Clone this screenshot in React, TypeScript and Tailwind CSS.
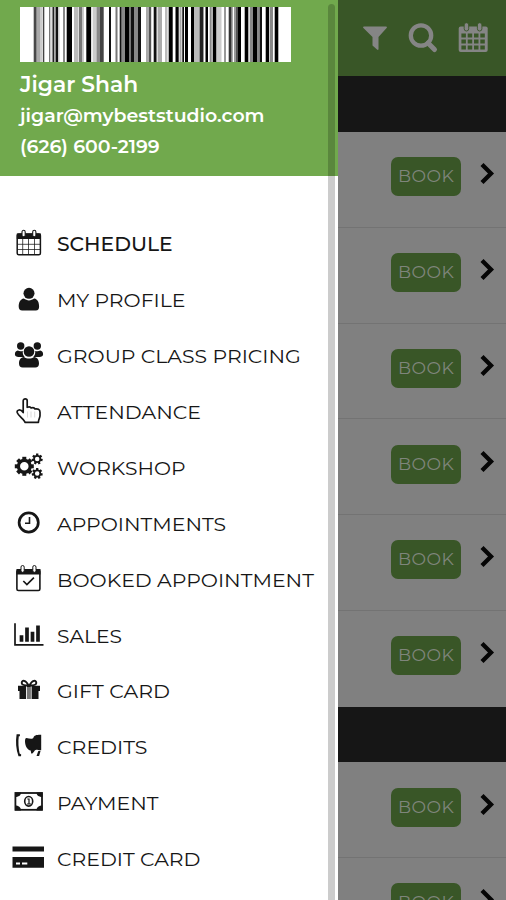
import { useLayoutEffect, useRef, useState, type ReactNode } from "react";

/** A single line of text stretched horizontally to fill a set width. */
function FitText({ text, width, className }: { text: string; width: number; className: string }) {
  const ref = useRef<HTMLSpanElement>(null);
  const [scale, setScale] = useState(1);
  useLayoutEffect(() => {
    const fit = () => {
      if (ref.current) setScale(width / ref.current.offsetWidth);
    };
    fit();
    document.fonts?.ready.then(fit);
  }, [width]);
  return (
    <span
      ref={ref}
      className={"inline-block origin-left whitespace-nowrap " + className}
      style={{ transform: `scaleX(${scale})` }}
    >
      {text}
    </span>
  );
}

// Bars as [start, end, shade], measured from the label's left edge.
const bars: [number, number, string][] = [
  [13.7, 16.7, "#484848"], [16.7, 20, "#aaa"], [20, 22, "#ccc"], [22.8, 24.3, "#444"],
  [29, 30.5, "#777"], [30.5, 32.5, "#ddd"], [32.5, 34, "#222"], [34, 35.7, "#aaa"], [35.7, 38, "#111"], [38, 39.5, "#ccc"],
  [43, 45, "#888"], [46.7, 52, "#000"], [54, 58, "#bbb"], [58, 59, "#ddd"], [59, 62.5, "#777"], [62.5, 64, "#ccc"],
  [66.3, 71, "#000"], [71, 72.5, "#ddd"], [73, 76.5, "#ccc"], [76.5, 80, "#888"], [80, 83.7, "#444"],
  [89, 91, "#111"], [95.5, 97.5, "#777"], [99.7, 101.7, "#111"], [101.7, 105, "#888"], [105, 109, "#000"],
  [109, 111, "#777"], [111, 114, "#111"], [114, 118, "#888"], [118, 121, "#111"],
  [126, 129, "#aaa"], [129, 131, "#555"], [131, 132, "#ddd"], [133.7, 136.7, "#111"], [136.7, 138, "#ddd"], [138, 142, "#aaa"],
  [145, 147.5, "#bbb"], [148.7, 152.7, "#000"], [155.5, 158.7, "#000"], [159.5, 161.5, "#aaa"], [162.3, 164, "#111"],
  [165, 168, "#000"], [171, 174, "#000"], [174, 179, "#bbb"], [179.5, 183, "#222"], [183, 184, "#999"], [185.5, 188, "#000"],
  [189.7, 191.7, "#888"], [192.7, 196.5, "#000"], [196.5, 198, "#ccc"], [198, 201.5, "#ccc"], [204, 206, "#999"],
  [208.7, 211.7, "#333"], [211.7, 213, "#aaa"], [214, 216, "#999"], [216, 218, "#555"], [218, 221, "#000"],
  [224.7, 228.5, "#000"], [228.5, 230, "#ddd"], [230, 233, "#888"], [233, 237, "#000"], [237, 239.7, "#888"], [239.7, 242, "#111"],
  [245.7, 249, "#000"], [249, 250, "#ccc"], [250, 253, "#888"], [254.7, 258.3, "#000"],
];

function Barcode() {
  return (
    <svg className="block h-[55px] w-[271px] bg-white" viewBox="0 0 271 55" preserveAspectRatio="none">
      {bars.map(([a, b, c]) => (
        <rect key={a} x={a} y="0" width={b - a} height="55" fill={c} />
      ))}
    </svg>
  );
}

function Svg({ children }: { children: ReactNode }) {
  return (
    <svg className="block h-8 w-8 shrink-0 text-[#161616]" viewBox="0 0 32 32" fill="none" stroke="currentColor">
      {children}
    </svg>
  );
}

const gear = (cx: number, cy: number, r: number, tooth: number, n: number) =>
  Array.from({ length: n }, (_, i) => (
    <rect
      key={i}
      x={cx - tooth / 2}
      y={cy - r}
      width={tooth}
      height={tooth}
      fill="currentColor"
      stroke="none"
      transform={`rotate(${(i * 360) / n} ${cx} ${cy})`}
    />
  ));

const icons: Record<string, ReactNode> = {
  schedule: (
    <Svg>
      <rect x="5.2" y="6" width="23.2" height="20.7" rx="1.5" strokeWidth="1.5" />
      <path d="M4.8 5.5h24v5.5h-24z" fill="currentColor" stroke="none" />
      <path d="M10.7 11v15M16.5 11v15M22.5 11v15M5.5 16.3h22.5M5.5 21.5h22.5" strokeWidth="1" opacity=".75" />
      <rect x="10" y="2.3" width="3.2" height="6.5" rx="1.6" fill="#fff" strokeWidth="1.1" />
      <rect x="20.7" y="2.3" width="3.2" height="6.5" rx="1.6" fill="#fff" strokeWidth="1.1" />
    </Svg>
  ),
  profile: (
    <Svg>
      <g fill="currentColor" stroke="none" transform="translate(.5 -.7)">
        <circle cx="16.5" cy="10" r="5.5" />
        <path d="M11.3 15.3c3.2 2.4 7.2 2.4 10.4 0 3.5.5 4.9 4 4.9 8 0 2.5-1 3.900-3.300 3.900H9.700c-2.300 0-3.500-1.400-3.500-3.900 0-4 1.600-7.500 5.100-8z" />
      </g>
    </Svg>
  ),
  group: (
    <Svg>
      <g fill="currentColor" stroke="none" transform="translate(.5 -.5)">
        <circle cx="8.2" cy="6.5" r="3.7" />
        <circle cx="24.8" cy="6.5" r="3.7" />
        <path d="M5.3 11c1.5 1 3.5 1 5 .4-.3 2.7.5 4.6 1.9 6H6c-2 0-3.6-1-3.6-2.7 0-2 1-3.5 2.9-3.7zM27.7 11c-1.5 1-3.5 1-5 .4.3 2.7-.5 4.6-1.9 6H27c2 0 3.6-1 3.6-2.7 0-2-1-3.5-2.9-3.7z" />
        <circle cx="16.5" cy="12" r="5.3" />
        <path d="M11.5 17.5c3 2 7 2 10 0 3.4.3 5 3 5 6.5 0 2.5-1.3 4-3.7 4H10.2c-2.4 0-3.7-1.5-3.7-4 0-3.5 1.6-6.2 5-6.5z" />
      </g>
    </Svg>
  ),
  hand: (
    <Svg>
      <path
        d="M11.2 16.5V4.8c0-2.7 4-2.7 4 0v6.5c2-.8 3.500-.3 4 .7 1.500-.6 3.200-.2 3.800 1 2.500-.5 5 .3 5 3.200v3.600c0 2.200-1.600 3.500-1.600 6.500H13c0-2-6.500-6.300-7.800-9.800-.6-2.700 3.200-4 6 0z"
        strokeWidth="1.7"
        strokeLinejoin="round"
      />
      <path d="M15.5 15.500v6M19 15.500v6M22.700 15.500v6" strokeWidth=".8" opacity=".2" />
    </Svg>
  ),
  gears: (
    <Svg>
      {gear(12.3, 14.3, 9.5, 4, 8)}
      <circle cx="12.3" cy="14.3" r="5.9" strokeWidth="3.3" />
      {gear(25.2, 7, 5.5, 2.3, 7)}
      <circle cx="25.2" cy="7" r="3.1" strokeWidth="1.7" />
      {gear(25.2, 21.5, 5.5, 2.3, 7)}
      <circle cx="25.2" cy="21.5" r="3.1" strokeWidth="1.7" />
    </Svg>
  ),
  clock: (
    <Svg>
      <circle cx="16.7" cy="14.5" r="9.6" strokeWidth="2.7" />
      <path d="M17.5 9v6.3h-4.5" strokeWidth="1.6" />
    </Svg>
  ),
  booked: (
    <Svg>
      <rect x="4.9" y="6" width="23" height="20.5" rx="1.5" strokeWidth="1.6" />
      <path d="M4.5 5h24v5.5h-24z" fill="currentColor" stroke="none" />
      <rect x="9" y="1.5" width="3.2" height="6.8" rx="1.6" fill="#fff" strokeWidth="1" />
      <rect x="20.8" y="1.5" width="3.2" height="6.8" rx="1.6" fill="#fff" strokeWidth="1" />
      <path d="m11.3 17 3.6 3.6 7-7" strokeWidth="1.7" />
    </Svg>
  ),
  sales: (
    <Svg>
      <path d="M3 3.3v21.5h28.5" strokeWidth="1.7" />
      <path d="M9.5 21.7v-6.5M15 21.7V7.5M20.5 21.7v-10M26 21.7V5.5" strokeWidth="3.7" />
    </Svg>
  ),
  gift: (
    <Svg>
      <path d="M6 10.7h22v5.3H6zM7.5 16h19v8h-19z" fill="currentColor" stroke="none" />
      <path d="M16.5 10.5C14 5 9.700 4.500 9.700 8c0 2.400 3.500 2.500 6.800 2.500zM17.500 10.500c2.500-5.500 6.800-6 6.800-2.500 0 2.400-3.500 2.500-6.800 2.500z" strokeWidth="1.9" />
      <path d="M15 12h3.7v12H15z" fill="#777" stroke="none" />
      <path d="M14.5 11.5V24M19.2 11.5V24" stroke="#fff" strokeWidth=".9" />
    </Svg>
  ),
  credits: (
    <Svg>
      <g fill="currentColor" stroke="none">
        <path d="M4.6 3.3h3.300v2H6.800C6 11 6.500 17 7.600 22.500l1.600 1-.2 1.800H6.500C3.900 18 3.500 10.500 4.600 3.300z" />
        <path d="M14.5 7c3 .7 6 1.700 7-.5.8-2 2.500-2.800 7.700-2.700v15.500c-2.700.3-4-.8-5.500-.3-2 .8-2 4-4.500 3.500l-.5-3c-3.500-.5-5.500-4.500-5.700-9 0-1.700.3-3.500 1.500-3.500z" />
        <path d="M26.300 20h2.200l-1.400 5h-2.600z" />
      </g>
    </Svg>
  ),
  payment: (
    <Svg>
      <rect x="3.4" y="6" width="26.6" height="16.8" strokeWidth="1.8" />
      <path d="M3 5.5h6c0 3-2.500 4.500-6 4.500zM30.500 5.500h-6c0 3 2.500 4.500 6 4.500zM3 23.500h6c0-3.500-2.500-5-6-5zM30.500 23.500h-6c0-3.500 2.500-5 6-5z" fill="currentColor" stroke="none" />
      <ellipse cx="16.7" cy="14.3" rx="4" ry="4.8" strokeWidth="1.6" />
      <path d="M15.3 12h1.7v4.500M15 17h4" strokeWidth="1.2" />
    </Svg>
  ),
  card: (
    <Svg>
      <path d="M.5 3.500h32.500v5H.5zM.5 14h32.500v10.700H.5z" fill="currentColor" stroke="none" />
      <path d="M4 20.500h4M10 20.500h5.300" stroke="#fff" strokeWidth="1.8" />
    </Svg>
  ),
};

const menu = [
  { icon: "schedule", label: "SCHEDULE", width: 115.5, bold: true },
  { icon: "profile", label: "MY PROFILE", width: 128.5 },
  { icon: "group", label: "GROUP CLASS PRICING", width: 244 },
  { icon: "hand", label: "ATTENDANCE", width: 143.5 },
  { icon: "gears", label: "WORKSHOP", width: 129 },
  { icon: "clock", label: "APPOINTMENTS", width: 169.5 },
  { icon: "booked", label: "BOOKED APPOINTMENT", width: 256.5 },
  { icon: "sales", label: "SALES", width: 65.5 },
  { icon: "gift", label: "GIFT CARD", width: 112.5 },
  { icon: "credits", label: "CREDITS", width: 90.5 },
  { icon: "payment", label: "PAYMENT", width: 101.5 },
  { icon: "card", label: "CREDIT CARD", width: 143.5 },
];

function ClassRow({ last }: { last?: boolean }) {
  return (
    <div
      className={
        "flex h-[95.8px] shrink-0 items-start pl-[53px] pt-[25.3px] " + (last ? "" : "border-b border-[#737373]")
      }
    >
      <div className="flex h-[39px] w-[70px] items-center rounded-[7px] bg-[#395627] pl-[7px] text-[#7f857b]">
        <FitText text="BOOK" width={56} className="text-[17px] font-normal leading-[39px] tracking-wide" />
      </div>
      <svg className="ml-[19px] mt-[4px] h-6 w-4" viewBox="0 0 16 24" fill="none" stroke="#050505" strokeWidth="4.3">
        <path d="m2 3.500 9 9-9 9" />
      </svg>
    </div>
  );
}

export default function App() {
  return (
    <div className="flex h-[900px] w-[506px] overflow-hidden bg-[#808080] font-['Montserrat','Inter',sans-serif]">
      <aside className="relative h-full w-[338px] shrink-0 bg-white">
        <header className="h-[176px] bg-[#71a94d] pl-[20px] pt-[7px] text-white">
          <Barcode />
          <div className="flex h-[44px] items-center">
            <FitText text="Jigar Shah" width={118} className="text-[22px] font-semibold" />
          </div>
          <div className="flex h-[20px] items-center">
            <FitText text="jigar@mybeststudio.com" width={245} className="text-[18px] font-semibold" />
          </div>
          <div className="flex h-[42px] items-center">
            <FitText text="(626) 600-2199" width={140} className="text-[18px] font-semibold" />
          </div>
        </header>
        <nav className="flex flex-col pt-[40px]">
          {menu.map((m) => (
            <div key={m.icon} className="flex h-[55.95px] items-center gap-[13px] pl-[12px]">
              {icons[m.icon]}
              <FitText
                text={m.label}
                width={m.width}
                className={"text-[19.5px] leading-6 text-[#161616] " + (m.bold ? "font-medium" : "font-normal")}
              />
            </div>
          ))}
        </nav>
        <div className="absolute bottom-0 right-[3px] top-[4px] w-[7px] rounded-t bg-black/20" />
      </aside>
      <main className="flex min-w-0 flex-1 flex-col overflow-hidden">
        <div className="flex h-[76px] shrink-0 items-center bg-[#395627] pl-[25px] text-[#858585]">
          <svg className="h-7 w-6" viewBox="0 0 24 28" fill="currentColor">
            <path d="M1 2.500h22c1 0 1.200.8.600 1.500L15.500 13v12c0 1-.8 1.200-1.500.6l-4.500-4V13L.4 4C-.2 3.300 0 2.500 1 2.500z" />
          </svg>
          <svg className="ml-[21px] h-8 w-8" viewBox="0 0 32 32" fill="none" stroke="currentColor">
            <circle cx="13" cy="13.5" r="10.2" strokeWidth="4.3" />
            <path d="m20 21 6.500 6.500" strokeWidth="5" strokeLinecap="round" />
          </svg>
          <svg className="ml-[17px] h-8 w-8" viewBox="0 0 32 32">
            <rect x="1.7" y="4.5" width="29" height="25.5" rx="2" fill="currentColor" />
            {[11.5, 17.5, 23.5].map((y) =>
              [4.4, 10.7, 17, 23.3].map((x) => (
                <rect key={`${x}-${y}`} x={x} y={y} width="4.5" height="4" fill="#395627" />
              )),
            )}
            <rect x="7.2" y="0.7" width="4.5" height="8.3" rx="2.2" fill="#858585" stroke="#395627" strokeWidth=".9" />
            <rect x="20.4" y="0.7" width="4.5" height="8.3" rx="2.2" fill="#858585" stroke="#395627" strokeWidth=".9" />
          </svg>
        </div>
        <div className="h-[56px] shrink-0 bg-[#161616]" />
        <ClassRow />
        <ClassRow />
        <ClassRow />
        <ClassRow />
        <ClassRow />
        <ClassRow last />
        <div className="h-[55.5px] shrink-0 bg-[#161616]" />
        <ClassRow />
        <ClassRow />
      </main>
    </div>
  );
}
